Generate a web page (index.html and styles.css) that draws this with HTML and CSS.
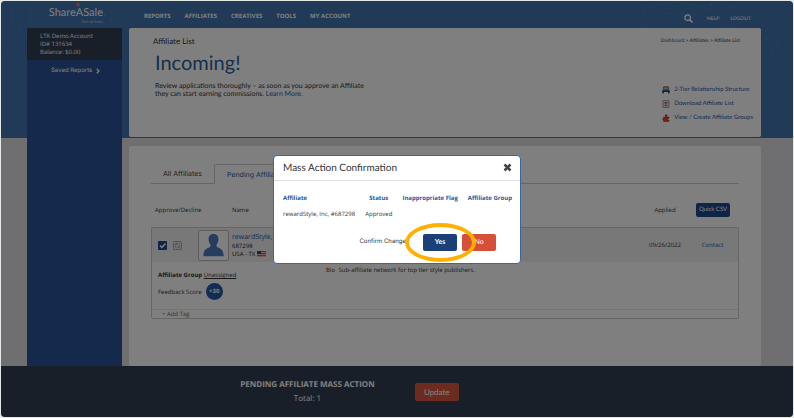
FILE: index.html
```html
<!DOCTYPE html>
<html lang="en">
<head>
<meta charset="UTF-8">
<meta name="viewport" content="width=device-width, initial-scale=1.0">
<title>Affiliate List</title>
<link rel="stylesheet" href="styles.css">
</head>
<body>
  <div class="page">
    <div class="content">
      <div class="sidebar-col">
        <a href="#" class="logo">
          <svg class="logo-star" viewBox="0 0 12 12"><path d="M6 0l1.800 3.200 4.200.6-2.600 3 .8 4.200L6 9.600 1.800 11l.8-4.200L0 3.800l4.200-.6z" fill="#e8764a"/></svg>
          <span class="logo-name">ShareASale</span>
          <span class="logo-sub">Part of Awin</span>
        </a>
        <div class="sidebar">
          <div class="account">
            <p>LTK Demo Account</p>
            <p>ID# 131634</p>
            <p>Balance: $0.00</p>
          </div>
          <a href="#" class="saved">Saved Reports
            <svg class="chevron" viewBox="0 0 8 12"><path d="M1.500 1.500L6 6l-4.500 4.500" fill="none" stroke="#fff" stroke-width="2.500"/></svg>
          </a>
        </div>
      </div>

      <div class="main">
        <div class="navbar">
          <nav>
            <a href="#">REPORTS</a>
            <a href="#">AFFILIATES</a>
            <a href="#">CREATIVES</a>
            <a href="#">TOOLS</a>
            <a href="#">MY ACCOUNT</a>
          </nav>
          <div class="tools">
            <button type="button" class="search" aria-label="Search">
              <svg viewBox="0 0 16 16"><circle cx="6.500" cy="6.500" r="5" fill="none" stroke="#fff" stroke-width="2.400"/><path d="M10.200 10.200L15 15" stroke="#fff" stroke-width="3"/></svg>
            </button>
            <a href="#">HELP</a>
            <a href="#">LOGOUT</a>
          </div>
        </div>

        <div class="card intro">
          <div class="intro-text">
            <h2>Affiliate List</h2>
            <h1>Incoming!</h1>
            <p>Review applications thoroughly – as soon as you approve an Affiliate<br>
              they can start earning commissions. <a href="#">Learn More.</a></p>
          </div>
          <div class="intro-side">
            <div class="crumbs"><a href="#">Dashboard</a> &gt; Affiliates &gt; Affiliate List</div>
            <ul class="actions">
              <li>
                <svg viewBox="0 0 16 16"><path d="M3 2h10v4H3z" fill="#fff" stroke="#444" stroke-width="1.500"/><path d="M3 1h10v2H3z" fill="#d9482e"/><path d="M1 7h14v3H1z" fill="#2d5f9e"/><path d="M0 10h16v2H0z" fill="#444"/><path d="M1 12h3v3H1zM12 12h3v3h-3z" fill="#444"/></svg>
                <a href="#">2-Tier Relationship Structure</a>
              </li>
              <li>
                <svg viewBox="0 0 16 16"><path d="M2 1h12v14H2z" fill="#eee" stroke="#666" stroke-width="1.200"/><path d="M5 4h6v2H5z" fill="#d9482e"/><path d="M5 7h6v1.500H5zM5 10h6v1.500H5z" fill="#2d5f9e"/></svg>
                <a href="#">Download Affiliate List</a>
              </li>
              <li>
                <svg viewBox="0 0 16 16"><path d="M3 6h4V4.500a2 2 0 1 1 3 0V6h4v3h-1.500a1.500 1.500 0 0 0 0 3H14v3H3v-3H2a2 2 0 0 1 0-3h1z" fill="#d9482e" stroke="#7a2a18" stroke-width=".8"/></svg>
                <a href="#">View / Create Affiliate Groups</a>
              </li>
            </ul>
          </div>
        </div>

        <div class="card list">
          <div class="tabs">
            <a href="#" class="tab">All Affiliates</a>
            <a href="#" class="tab active">Pending Affiliates</a>
          </div>

          <table class="affiliates">
            <thead>
              <tr>
                <th class="col-check">Approve/Decline</th>
                <th class="col-name">Name</th>
                <th class="col-date">Applied</th>
                <th class="col-action"><button type="button" class="btn csv">Quick CSV</button></th>
              </tr>
            </thead>
            <tbody>
              <tr class="row">
                <td>
                  <div class="choices">
                    <input type="checkbox" class="approve" aria-label="Approve" checked>
                    <input type="checkbox" class="decline" aria-label="Decline">
                    <svg class="avatar" viewBox="0 0 30 30"><path d="M15 3c4 0 5.500 3 5 6.500-.3 2.500-1.500 4-2 5 0 2 1 2.500 3 3.200 3 1.200 4.500 4 4.500 8.300h-21c0-4.300 1.500-7.100 4.500-8.300 2-.7 3-1.200 3-3.200-.5-1-1.700-2.500-2-5C9.500 6 11 3 15 3z" fill="#4a7cc0"/></svg>
                  </div>
                </td>
                <td class="who">
                  <a href="#">rewardStyle, Inc</a>
                  <p>687298</p>
                  <p>USA - TX <svg class="flag" viewBox="0 0 18 12"><path d="M0 0h18v12H0z" fill="#f2b9ac"/><path d="M0 0h18v2H0zM0 4h18v2H0zM0 8h18v2H0z" fill="#e0563e"/><path d="M0 0h8v6H0z" fill="#2b4a8c"/></svg></p>
                </td>
                <td class="mid">09/26/2022</td>
                <td class="mid"><a href="#">Contact</a></td>
              </tr>
              <tr class="details">
                <td colspan="4">
                  <div class="detail-grid">
                    <div class="facts">
                      <p><b>Affiliate Group</b> <a href="#" class="unassigned">Unassigned</a></p>
                      <p class="score">Feedback Score <span class="badge">+30</span></p>
                    </div>
                    <p class="bio"><span>Bio</span> Sub-affiliate network for top tier style publishers.</p>
                  </div>
                  <div class="tag-row"><a href="#">+ Add Tag</a></div>
                </td>
              </tr>
            </tbody>
          </table>
        </div>
      </div>
    </div>

    <div class="footer">
      <div class="summary">
        <h3>PENDING AFFILIATE MASS ACTION</h3>
        <p>Total: 1</p>
      </div>
      <button type="button" class="btn update">Update</button>
    </div>

    <div class="overlay">
      <div class="modal" role="dialog" aria-labelledby="modal-title">
        <div class="modal-head">
          <h2 id="modal-title">Mass Action Confirmation</h2>
          <button type="button" class="close" aria-label="Close">
            <svg viewBox="0 0 12 12"><path d="M2 2l8 8M10 2l-8 8" stroke="#444" stroke-width="3.400"/></svg>
          </button>
        </div>
        <table class="confirm">
          <thead>
            <tr><th class="left">Affiliate</th><th>Status</th><th>Inappropriate Flag</th><th>Affiliate Group</th></tr>
          </thead>
          <tbody>
            <tr><td class="left">rewardStyle, Inc, #687298</td><td>Approved</td><td></td><td></td></tr>
          </tbody>
        </table>
        <div class="modal-actions">
          <span>Confirm Change</span>
          <div class="yes-wrap">
            <button type="button" class="btn yes">Yes</button>
            <span class="ring"></span>
          </div>
          <button type="button" class="btn no">No</button>
        </div>
      </div>
    </div>
  </div>
</body>
</html>
```
FILE: styles.css
```css
* {
  box-sizing: border-box;
}
body {
  margin: 0;
  padding: 1px;
  background: #e4e8e4;
  font-family: "Open Sans", "Noto Sans", sans-serif;
  font-size: 6px;
  line-height: 8px;
  color: #333;
  text-rendering: geometricPrecision;
}
h1, h2, h3, p, ul {
  margin: 0;
  padding: 0;
  font-weight: normal;
}
ul {
  list-style: none;
}
a {
  color: #1f56a8;
  text-decoration: none;
}
button {
  font-family: Lato, sans-serif;
  border: none;
  padding: 0;
  background: none;
  cursor: pointer;
  text-rendering: geometricPrecision;
}
svg {
  display: block;
}
.page {
  position: relative;
  display: flex;
  flex-direction: column;
  min-height: calc(100vh - 2px);
  border-radius: 4px;
  overflow: hidden;
  background: #dedee3;
}
.content {
  flex: 1;
  display: flex;
  gap: 7px;
  padding: 0 32px 0 26px;
  background-image: url("data:image/svg+xml,%3Csvg xmlns='http://www.w3.org/2000/svg' width='794' height='137'%3E%3Cg fill='none' stroke='%234b7db4' stroke-width='1'%3E%3Ccircle cx='-12' cy='16' r='42'/%3E%3Ccircle cx='-12' cy='16' r='33'/%3E%3Ccircle cx='-12' cy='16' r='24'/%3E%3Ccircle cx='686' cy='22' r='45'/%3E%3Cpath d='M646 9q30-18 80 8M644 20q40-20 86 8'/%3E%3C/g%3E%3Cg fill='%235485ba'%3E%3Ccircle cx='104' cy='14' r='1'/%3E%3Ccircle cx='110' cy='18' r='1'/%3E%3Ccircle cx='120' cy='15' r='1'/%3E%3Ccircle cx='710' cy='4' r='1'/%3E%3Ccircle cx='765' cy='38' r='1'/%3E%3Ccircle cx='777' cy='42' r='1'/%3E%3Ccircle cx='772' cy='50' r='1'/%3E%3C/g%3E%3C/svg%3E"), linear-gradient(#4074ae, #4074ae);
  background-repeat: no-repeat;
  background-size: auto, 100% 137px;
}

/* sidebar */
.sidebar-col {
  flex: 0 0 95px;
  min-width: 0;
  display: flex;
  flex-direction: column;
}
.logo {
  height: 27px;
  padding: 1px 19px 0 0;
  display: flex;
  flex-direction: column;
  align-items: flex-end;
  color: #fff;
  font-family: Lato, sans-serif;
}
.logo-star {
  width: 6px;
  height: 5px;
  margin-right: 22px;
}
.logo-name {
  font-size: 11px;
  line-height: 12px;
}
.logo-sub {
  font-size: 4px;
  line-height: 5px;
  opacity: 0.6;
}
.sidebar {
  flex: 1;
  background: #285296;
}
.account {
  height: 32px;
  padding: 4px 13px;
  background: #303e52;
  color: #fff;
}
.saved {
  display: flex;
  align-items: center;
  gap: 4px;
  padding: 7px 0 7px 24px;
  color: #fff;
  font-family: Inter, sans-serif;
  white-space: nowrap;
}
.chevron {
  width: 4px;
  height: 6px;
}

/* top nav */
.main {
  flex: 1;
  min-width: 0;
  display: flex;
  flex-direction: column;
}
.navbar {
  height: 27px;
  display: flex;
  justify-content: space-between;
  align-items: center;
  padding: 3px 10px 0 15px;
}
.navbar a {
  color: #fff;
}
nav {
  display: flex;
  gap: 14px;
  font-weight: bold;
}
.tools {
  display: flex;
  align-items: center;
  gap: 11px;
  padding-top: 5px;
  font-family: Lato, sans-serif;
  font-size: 5px;
}
.search {
  margin-right: 3px;
}
.search svg {
  width: 9px;
  height: 9px;
}

/* cards */
.card {
  background: #fff;
  border-radius: 2px;
}
.intro {
  height: 109px;
  margin-bottom: 9px;
  padding: 8px 8px 0 24px;
  display: flex;
  justify-content: space-between;
}
.intro-text {
  font-family: Lato, sans-serif;
}
.intro-text h2 {
  font-size: 8px;
  line-height: 10px;
}
.intro-text h1 {
  padding-left: 2px;
  font-size: 20px;
  line-height: 34px;
  color: #2d5f9e;
}
.intro-text p {
  padding: 2px 0 0 2px;
  font-size: 7px;
}
.intro-side {
  display: flex;
  flex-direction: column;
  font-family: Lato, sans-serif;
}
.crumbs {
  padding-right: 13px;
  font-size: 5px;
  line-height: 10px;
  text-align: right;
}
.actions {
  display: flex;
  flex-direction: column;
  align-self: flex-end;
  gap: 6px;
  padding-top: 40px;
}
.actions li {
  display: flex;
  align-items: center;
  gap: 4px;
}
.actions svg {
  width: 8px;
  height: 8px;
}
.list {
  flex: 1;
  padding: 18px 22px 20px;
}

/* tabs */
.tabs {
  display: flex;
  height: 20px;
}
.tabs::after {
  content: "";
  flex: 1;
  border-bottom: 1px solid #ccc;
}
.tab {
  padding: 5px 12px;
  border-bottom: 1px solid #ccc;
  font-family: Inter, sans-serif;
  font-size: 7px;
  line-height: 10px;
  color: #444;
}
.tab.active {
  border: 1px solid #ccc;
  border-bottom: none;
  border-radius: 2px 2px 0 0;
  color: #1f56a8;
}

/* affiliate table */
.affiliates {
  width: 100%;
  table-layout: fixed;
  border-collapse: separate;
  border-spacing: 0;
}
.affiliates th, .affiliates td {
  padding: 0;
  font-weight: normal;
  text-align: left;
}
.affiliates thead th {
  height: 43px;
  padding-top: 8px;
}
.affiliates .col-check {
  width: 81px;
  padding-left: 4px;
}
.affiliates .col-date {
  width: 44px;
  text-align: center;
}
.affiliates .col-action {
  width: 52px;
  text-align: center;
}
.row td {
  height: 35px;
  background: #f0f0f0;
  border-top: 1px solid #ccc;
}
.row td:first-child {
  border-left: 1px solid #ccc;
  border-top-left-radius: 2px;
}
.row td:last-child {
  border-right: 1px solid #ccc;
  border-top-right-radius: 2px;
}
.affiliates .mid {
  text-align: center;
}
.choices {
  display: flex;
  align-items: center;
  gap: 6px;
  padding-left: 6px;
}
.approve, .decline {
  appearance: none;
  width: 9px;
  height: 9px;
  margin: 0;
  border-radius: 1px;
}
.approve {
  background: #1d4a8f url("data:image/svg+xml,%3Csvg xmlns='http://www.w3.org/2000/svg' viewBox='0 0 9 9'%3E%3Cpath d='M2 4.500l2 2 3.500-4' fill='none' stroke='white' stroke-width='1.500'/%3E%3C/svg%3E");
}
.decline {
  border: 1px solid #aaa;
  background: url("data:image/svg+xml,%3Csvg xmlns='http://www.w3.org/2000/svg' viewBox='0 0 7 7'%3E%3Cg fill='none' stroke='%23aaa'%3E%3Ccircle cx='3.500' cy='3.500' r='2.500'/%3E%3Cpath d='M1.700 1.700l3.600 3.600'/%3E%3C/g%3E%3C/svg%3E");
}
.avatar {
  width: 31px;
  height: 31px;
  margin-left: 10px;
  background: #fff;
  border: 1px solid #bbb;
  border-radius: 2px;
}
.who a {
  font-size: 7px;
}
.who p {
  color: #222;
}
.flag {
  display: inline-block;
  width: 9px;
  height: 6px;
  vertical-align: middle;
}
.details td {
  border: 1px solid #ccc;
  border-top: none;
  border-radius: 0 0 2px 2px;
}
.detail-grid {
  display: grid;
  grid-template-columns: 168px 1fr;
  height: 47px;
  padding: 4px 6px 0;
}
.facts {
  padding-top: 5px;
}
.unassigned {
  color: #333;
  text-decoration: underline;
}
.score {
  display: flex;
  align-items: center;
  gap: 4px;
  padding-top: 4px;
}
.badge {
  width: 17px;
  height: 17px;
  border-radius: 50%;
  background: #2458a6;
  color: #fff;
  font-weight: bold;
  line-height: 17px;
  text-align: center;
}
.bio span {
  margin-right: 2px;
}
.tag-row {
  border-top: 1px solid #e8e8e8;
  padding-left: 10px;
}
.tag-row a {
  color: #666;
}

/* buttons */
.btn {
  height: 17px;
  width: 34px;
  border-radius: 2px;
  background: #1b4077;
  color: #fff;
  font-size: 7px;
  line-height: 10px;
}
.csv {
  height: 14px;
  font-size: 6px;
  background: #1d4a8f;
}
.update {
  width: 44px;
  height: 18px;
  font-size: 8px;
  background: #d9573f;
}
.no {
  background: #d64f38;
}

/* bottom bar */
.footer {
  height: 51px;
  display: flex;
  justify-content: center;
  align-items: center;
  gap: 40px;
  padding-right: 95px;
  background: #303e52;
  color: #fff;
}
.summary {
  text-align: center;
}
.summary h3 {
  font-size: 8px;
  font-weight: bold;
  line-height: 14px;
}
.summary p {
  font-size: 8px;
  line-height: 14px;
}

/* modal */
.overlay {
  position: absolute;
  inset: 0;
  display: flex;
  justify-content: center;
  align-items: center;
  background: rgba(0, 0, 0, 0.5);
}
.modal {
  width: 248px;
  background: #fff;
  border: 1px solid #3566a8;
  border-radius: 4px;
}
.modal-head {
  height: 25px;
  display: flex;
  justify-content: space-between;
  align-items: center;
  padding: 0 8px 0 9px;
  border-bottom: 1px solid #ddd;
}
.modal-head h2 {
  font-family: Lato, sans-serif;
  font-size: 10px;
  line-height: 12px;
}
.close svg {
  width: 9px;
  height: 9px;
}
.confirm {
  margin: 9px 0 0 9px;
  border-collapse: collapse;
}
.confirm th, .confirm td {
  height: 16px;
  padding: 0 10px 0 0;
  text-align: center;
  white-space: nowrap;
}
.confirm th {
  color: #2458a6;
}
.confirm .left {
  text-align: left;
}
.modal-actions {
  display: flex;
  justify-content: flex-end;
  align-items: center;
  padding: 12px 24px 12px 0;
}
.modal-actions > span {
  margin-right: 17px;
  font-family: Inter, sans-serif;
}
.yes-wrap {
  position: relative;
  margin-right: 5px;
}
.yes {
  font-weight: bold;
}
.ring {
  position: absolute;
  left: -18px;
  top: -11px;
  width: 71px;
  height: 39px;
  border: 4px solid #ffb000;
  border-radius: 50%;
  pointer-events: none;
}
```
